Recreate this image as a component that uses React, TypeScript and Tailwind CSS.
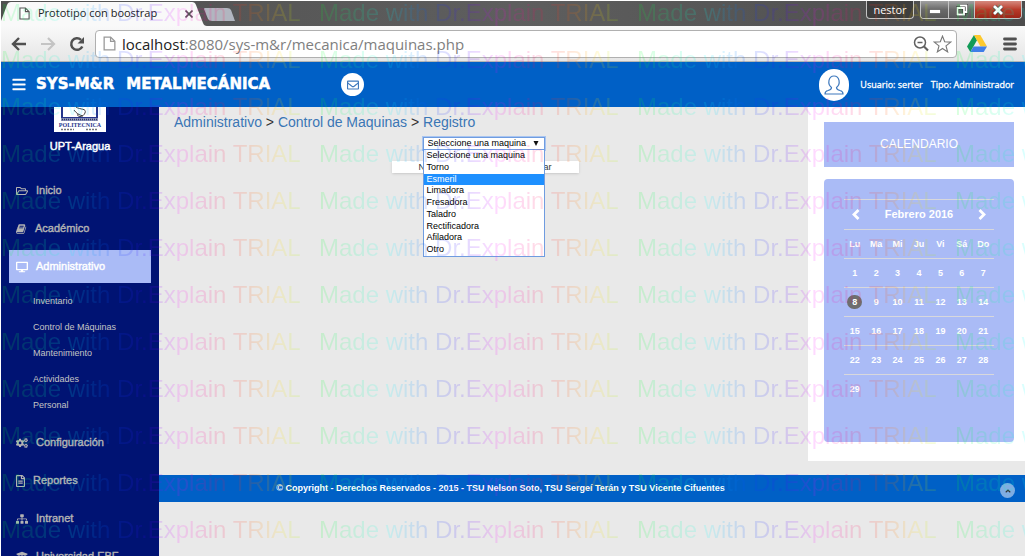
import React, { useState } from "react";
import { FaBars, FaRegEnvelope, FaRegFolderOpen, FaDesktop, FaCogs, FaRegFileAlt, FaSitemap, FaUniversity, FaAngleUp } from "react-icons/fa";

const MARK = "Made with Dr.Explain TRIAL";

function Watermark() {
  return (
    <div aria-hidden="true" className="pointer-events-none absolute inset-px z-50 overflow-hidden font-['Liberation_Sans',Arial,sans-serif] opacity-14">
      {Array.from({ length: 12 }, (_, i) => (
        <div key={i} className="flex h-[47px] w-[1272px]">
          {[0, 1, 2, 3].map((c) => (
            <span
              key={c}
              className="w-[318px] shrink-0 bg-[linear-gradient(90deg,#00ff20,#00ffff_22%,#0050ff_34%,#4000ff_46%,#ff00ff_56%,#ff0060_68%,#ff5000_78%,#ffe000_88%,#80ff00_97%,#00ff20)] bg-clip-text text-2xl leading-[24px] whitespace-pre text-transparent"
            >
              {MARK}
            </span>
          ))}
        </div>
      ))}
    </div>
  );
}

function PageIcon({ className }: { className: string }) {
  return (
    <svg viewBox="0 0 12 14" className={className} fill="#fff" stroke="currentColor" strokeWidth="1.2">
      <path d="M1 1h6l4 4v8H1z" />
      <path d="M7 1v4h4" fill="none" />
    </svg>
  );
}

function BrowserChrome() {
  return (
    <div className="shrink-0 font-['Open_Sans','Noto_Sans',sans-serif]">
      <div className="flex h-[25px] items-start bg-linear-to-r from-[#505050] via-[#5e5e5e] to-[#4c4c4c]">
        <div className="relative flex h-[25px] w-[206px] items-center pr-3 pl-[18px]">
          <svg viewBox="0 0 206 25" preserveAspectRatio="none" className="absolute inset-0 h-full w-full">
            <path d="M0 25V20L6 4Q7 1 10 1H191Q194 1 195 4L202 22Q203 25 206 25Z" fill="#f9f9f9" />
          </svg>
          <PageIcon className="relative h-[13px] w-[11px] text-[#555]" />
          <span className="relative ml-2 grow text-[11px] text-[#222]">Prototipo con boostrap</span>
          <button aria-label="Cerrar pestaña" className="relative p-0.5">
            <svg viewBox="0 0 8 8" className="h-2 w-2" stroke="#555" strokeWidth="1.6"><path d="M0.5 .5l7 7M7.5 .5l-7 7" /></svg>
          </button>
        </div>
        <button aria-label="Nueva pestaña" className="-ml-1 mt-1.5">
          <svg viewBox="0 0 32 15" className="h-[15px] w-8"><path d="M2 1H24Q27 1 28 3L32 14H9Q6 14 5 12L1 2Q1 1 2 1Z" fill="#b1b6c0" /></svg>
        </button>
        <div className="grow" />
        <button className="h-[18px] w-12 rounded-b-sm border border-t-0 border-[#c4c4c4] bg-[#3d3d3d] text-[11px] leading-4 text-white">nestor</button>
        <div className="mr-[3px] ml-[6px] flex h-[18px] overflow-hidden rounded-b-sm border border-t-0 border-[#c4c4c4]">
          <button aria-label="Minimizar" className="flex w-7 items-center justify-center border-r border-[#c4c4c4] bg-linear-to-b from-[#a0a0a0] via-[#6a6a6a] to-[#5a5a5a]">
            <svg viewBox="0 0 12 5" className="mt-1 h-[5px] w-3"><path d="M.5.5h11v4H.5z" fill="#fff" stroke="#444" strokeWidth=".6" /></svg>
          </button>
          <button aria-label="Restaurar" className="flex w-[26px] items-center justify-center border-r border-[#c4c4c4] bg-linear-to-b from-[#a0a0a0] via-[#6a6a6a] to-[#5a5a5a]">
            <svg viewBox="0 0 12 12" className="h-3 w-3" fill="none"><path d="M4 1.500h6.500v6.500h-2M1.500 4h6.500v6.500h-6.500z" stroke="#333" strokeWidth="3" /><path d="M4 1.500h6.500v6.500h-2M1.500 4h6.500v6.500h-6.500z" stroke="#fff" strokeWidth="1.800" /></svg>
          </button>
          <button aria-label="Cerrar" className="flex w-[46px] items-center justify-center bg-linear-to-b from-[#d4897e] via-[#b93a29] to-[#9c2417]">
            <svg viewBox="0 0 12 10" className="h-2.5 w-3"><path d="M2 1l8 8M10 1l-8 8" stroke="#444" strokeWidth="4" /><path d="M2 1l8 8M10 1l-8 8" stroke="#fff" strokeWidth="2.8" /></svg>
          </button>
        </div>
      </div>
      <div className="flex h-9 items-center border-b border-[#b5b5b5] bg-linear-to-b from-[#f9f9f9] to-[#e6e6e6] pr-2 pl-2.5">
        <button aria-label="Atrás">
          <svg viewBox="0 0 16 14" className="h-3.5 w-4" fill="none" stroke="#505050" strokeWidth="2.400"><path d="M15 7H2M8 1L2 7l6 6" /></svg>
        </button>
        <button aria-label="Adelante" className="ml-[13px]">
          <svg viewBox="0 0 16 14" className="h-3.5 w-4" fill="none" stroke="#c4c4c4" strokeWidth="2.200"><path d="M1 7h13M8 1l6 6-6 6" /></svg>
        </button>
        <button aria-label="Recargar" className="ml-[13px]">
          <svg viewBox="0 0 16 16" className="h-4 w-4"><path d="M13.300 10.500A5.800 5.800 0 1 1 12 3.800" fill="none" stroke="#505050" strokeWidth="2.500" /><path d="M15 1v6.500H8.500z" fill="#505050" /></svg>
        </button>
        <div className="ml-2.5 flex h-7 grow items-center rounded-sm border border-[#b0b0b0] bg-white pr-1 pl-[7px]">
          <PageIcon className="h-[15px] w-[13px] text-[#999]" />
          <div className="ml-1.5 grow text-[15px] leading-6 text-[#808080]">
            <span className="text-[#222]">localhost</span>:8080/sys-m&amp;r/mecanica/maquinas.php
          </div>
          <svg viewBox="0 0 16 16" className="h-4 w-4" fill="none" stroke="#606060"><circle cx="7" cy="6.500" r="5.500" strokeWidth="1.500" /><path d="M4.500 6.500h5" strokeWidth="1.500" /><path d="M11 10.500l4 4" strokeWidth="2.200" /></svg>
          <svg viewBox="0 0 20 19" className="ml-1 h-[18px] w-[19px]" fill="#fff" stroke="#777" strokeWidth="1.200"><path d="M10 1.200l2.300 6 6.400.3-5 4 1.700 6.300L10 14.300l-5.400 3.500L6.300 11.500l-5-4 6.400-.3z" /></svg>
        </div>
        <svg viewBox="0 0 20 17" className="ml-2.5 h-[17px] w-5"><path d="M7 0L0 11.500 3.300 17 10 5.300z" fill="#119b58" /><path d="M7 0h6.300L20 11.500h-6.500z" fill="#fdc92e" /><path d="M3.300 17L6.600 11.500H20L16.700 17z" fill="#3f7ee8" /></svg>
        <button aria-label="Menú" className="ml-4">
          <svg viewBox="0 0 14 14" className="h-3.5 w-3.5" stroke="#505050" strokeWidth="2.800" strokeLinecap="round"><path d="M1.500 2h11M1.500 7h11M1.500 12h11" /></svg>
        </button>
      </div>
    </div>
  );
}

function Header() {
  return (
    <header className="flex h-[45px] shrink-0 items-center bg-[#0060c6] px-[11px] text-white">
      <button aria-label="Alternar menú"><FaBars className="h-[15px] w-[14px]" /></button>
      <a href="#inicio" className="ml-2.5 flex gap-3 font-['DejaVu_Sans',sans-serif] text-[15px] font-bold [-webkit-text-stroke:0.5px_white]">
        <span>SYS-M&amp;R</span>
        <span>METALMECÁNICA</span>
      </a>
      <a href="#mensajes" aria-label="Mensajes" className="ml-[71px] flex h-[23px] w-[23px] items-center justify-center rounded-full bg-white text-[#3f79bd]">
        <FaRegEnvelope className="h-3 w-3" />
      </a>
      <div className="grow" />
      <div className="flex h-8 w-[30px] items-center justify-center rounded-full bg-white">
        <svg viewBox="0 0 20 20" className="h-5 w-5" fill="none" stroke="#3f79bd" strokeWidth="1.200"><path d="M7.500 12.500C3 9 4.500 1 10 1s7 8 2.500 11.500c0 2 1 2.300 3.500 3 2 .5 3 1.500 3 3.500H1c0-2 1-3 3-3.500 2.500-.7 3.500-1 3.500-3z" /></svg>
      </div>
      <div className="ml-[11px] flex gap-2 font-['Open_Sans','Noto_Sans',sans-serif] text-[9px] [-webkit-text-stroke:0.3px_white]">
        <span>Usuario: serter</span>
        <span>Tipo: Administrador</span>
      </div>
    </header>
  );
}

function BookIcon({ className }: { className?: string }) {
  return (
    <svg viewBox="0 0 1792 1792" fill="currentColor" className={className}>
      <path d="M1639 478q40 57 18 129l-275 906q-19 64-76.500 107.500t-122.500 43.500h-923q-77 0-148.500-53.500t-99.500-131.500q-24-67-2-127 0-4 3-27t4-37q1-8-3-21.500t-3-19.500q2-11 8-21t16.500-23.500 16.500-23.500q23-38 45-91.500t30-91.500q3-10 .5-30t-.5-28q3-11 17-28t17-23q21-36 42-92t25-90q1-9-2.500-32t.5-28q4-13 22-30.500t22-22.500q19-26 42.500-84.500t27.500-96.500q1-8-3-25.500t-2-26.500q2-8 9-18t18-23 17-21q8-12 16.500-30.500t15-35 16-36 19.500-32 26.500-23.500 36-11.500 47.500 5.500l-1 3q38-9 51-9h761q74 0 114 56t18 130l-274 906q-36 119-71.500 153.500t-128.500 34.500h-869q-27 0-38 15-11 16-1 43 24 70 144 70h923q29 0 56-15.500t35-41.500l300-987q7-22 5-57 38 15 59 43zm-1064 2q-4 13 2 22.500t20 9.500h608q13 0 25.500-9.500t16.500-22.500l21-64q4-13-2-22.500t-20-9.500h-608q-13 0-25.500 9.500t-16.500 22.500zm-83 256q-4 13 2 22.500t20 9.500h608q13 0 25.500-9.500t16.500-22.500l21-64q4-13-2-22.500t-20-9.500h-608q-13 0-25.500 9.500t-16.500 22.500z" />
    </svg>
  );
}

function NavItem({ icon, label, active }: { icon: React.ReactNode; label: string; active?: boolean }) {
  return (
    <li>
      <a href="#menu" className={`flex h-[33px] items-center gap-2 pl-[7px] text-[11px] [-webkit-text-stroke:0.4px_currentColor] ${active ? "bg-[#aabbf6] text-white" : "text-[#b3b3b3]"}`}>
        {icon}
        {label}
      </a>
    </li>
  );
}

function Sidebar() {
  return (
    <aside className="w-[158px] shrink-0 overflow-hidden bg-[#001373]">
      <svg viewBox="0 0 52 25" className="mx-auto block h-[25px] w-[52px]">
        <rect width="52" height="25" fill="#fff" />
        <path d="M8 0v11h35V0" fill="none" stroke="#26358c" strokeWidth="2" />
        <path d="M22 0c4 3 11 1 9 6s-9 4-7 1M20 3c2 3 5 5 9 6" fill="none" stroke="#444" />
        <path d="M7 11h37v3H7z" fill="#8b93b8" />
        <path d="M8 12.500h35" stroke="#333a66" strokeWidth="1.500" strokeDasharray="1 1" />
        <text x="26" y="20" textAnchor="middle" fontSize="6" fontWeight="bold" fill="#26358c" className="font-['Liberation_Serif',serif]">POLITECNICA</text>
        <path d="M7 22.500h13M32 22.500h12" stroke="#777" strokeWidth="1.500" strokeDasharray="2 1" />
      </svg>
      <p className="mt-1.5 text-center text-[11px] leading-4 text-white [-webkit-text-stroke:0.5px_currentColor]">UPT-Aragua</p>
      <nav className="mt-5 px-2">
        <ul className="flex flex-col gap-[5px]">
          <NavItem icon={<FaRegFolderOpen className="h-3 w-3" />} label="Inicio" />
          <NavItem icon={<BookIcon className="h-3 w-[11px]" />} label="Académico" />
          <NavItem icon={<FaDesktop className="h-3 w-3" />} label="Administrativo" active />
          <li className="mb-[3px]">
            <ul>
              {["Inventario", "Control de Máquinas", "Mantenimiento", "Actividades", "Personal"].map((t) => (
                <li key={t}>
                  <a href="#submenu" className="block pl-6 text-[9px] leading-[26px] text-[#c4c4c4]">{t}</a>
                </li>
              ))}
            </ul>
          </li>
          <NavItem icon={<FaCogs className="h-3 w-3" />} label="Configuración" />
          <NavItem icon={<FaRegFileAlt className="h-3 w-[9px]" />} label="Reportes" />
          <NavItem icon={<FaSitemap className="h-3 w-3" />} label="Intranet" />
          <NavItem icon={<FaUniversity className="h-3 w-3" />} label="Universidad EBF" />
        </ul>
      </nav>
    </aside>
  );
}

const MACHINES = ["Seleccione una maquina", "Torno", "Esmeril", "Limadora", "Fresadora", "Taladro", "Rectificadora", "Afiladora", "Otro"];

function MachinePicker() {
  const [value, setValue] = useState(MACHINES[0]);
  return (
    <div className="relative z-10 mt-1 ml-[31px] w-[122px]">
      <select
        aria-label="Maquina"
        value={value}
        onChange={(e) => setValue(e.target.value)}
        className="block h-[13px] w-full appearance-none border border-[#6f9ce0] bg-white pl-1 text-[9px] leading-[11px] text-black outline-1 outline-[#a9c5f0]"
      >
        {MACHINES.map((m) => <option key={m}>{m}</option>)}
      </select>
      <svg aria-hidden="true" viewBox="0 0 6 5" className="pointer-events-none absolute top-1 right-1.5 h-[5px] w-1.5"><path d="M.5 0h5L3 5z" fill="#111" /></svg>
      <ul role="listbox" aria-label="Opciones de maquina" className="absolute top-3 left-0 flex h-[108px] w-full flex-col border border-[#6f9ce0] bg-white text-[9px] leading-[11px] text-black">
        {MACHINES.map((m) => (
          <li key={m} role="option" aria-selected={m === "Esmeril"} onClick={() => setValue(m)} className={`flex-1 pl-[3px] ${m === "Esmeril" ? "bg-[#1e90ff] text-white" : ""}`}>{m}</li>
        ))}
      </ul>
    </div>
  );
}

const WEEKS: number[][] = [0, 1, 2, 3].map((w) => [1, 2, 3, 4, 5, 6, 7].map((d) => w * 7 + d)).concat([[29]]);

function Calendar() {
  return (
    <aside className="h-[354px] w-[217px] shrink-0 bg-white pt-[15px] pr-[11px] pl-4">
      <h2 className="bg-[#aabbf6] text-center text-xs leading-[45px] text-white">CALENDARIO</h2>
      <div className="mt-3 h-[263px] rounded bg-[#aabbf6] px-5 pt-5 text-white">
        <div className="flex h-[30px] items-center justify-between border-t border-[#d8d8dc] px-2">
          <button aria-label="Mes anterior">
            <svg viewBox="0 0 8 11" className="h-[11px] w-2" fill="none" stroke="currentColor" strokeWidth="2.800"><path d="M6.500 1L2 5.500l4.500 4.500" /></svg>
          </button>
          <span className="text-[11px] font-bold">Febrero 2016</span>
          <button aria-label="Mes siguiente">
            <svg viewBox="0 0 8 11" className="h-[11px] w-2" fill="none" stroke="currentColor" strokeWidth="2.800"><path d="M1.500 1L6 5.500 1.500 10" /></svg>
          </button>
        </div>
        <table className="w-full table-fixed border-collapse text-center text-[9px] leading-[14px] font-bold">
          <thead>
            <tr className="h-[29px] border-t border-[#d8d8dc]">
              {["Lu", "Ma", "Mi", "Ju", "Vi", "Sá", "Do"].map((d) => <th key={d} className="p-0">{d}</th>)}
            </tr>
          </thead>
          <tbody>
            {WEEKS.map((week) => (
              <tr key={week[0]} className="h-[29px] border-t border-[#d8d8dc]">
                {week.map((d) => (
                  <td key={d} className="p-0">
                    <span className={d === 8 ? "mx-auto block w-[15px] rounded-full bg-[#6e6e6e]" : ""}>{d}</span>
                  </td>
                ))}
              </tr>
            ))}
          </tbody>
        </table>
      </div>
    </aside>
  );
}

export default function App() {
  return (
    <div className="relative flex h-screen flex-col overflow-hidden bg-white p-px font-['Liberation_Sans',Arial,sans-serif]">
      <BrowserChrome />
      <Header />
      <div className="flex min-h-0 grow">
        <Sidebar />
        <div className="flex min-w-0 grow flex-col bg-[#e9e9e9]">
          <div className="flex">
            <main className="min-w-0 grow pt-1 pl-[15px]">
              <p className="text-sm leading-[22px] text-[#333]">
                <a href="#administrativo" className="text-[#3a76b5]">Administrativo</a> &gt; <a href="#control" className="text-[#3a76b5]">Control de Maquinas</a> &gt; <a href="#registro" className="text-[#3a76b5]">Registro</a>
              </p>
              <div className="pr-3">
                <div className="mx-auto w-[187px]">
                  <MachinePicker />
                  <p className="mt-[11px] bg-white text-center text-[9px] leading-[12px] text-[#333] shadow-sm">No existen registros para mostrar</p>
                </div>
              </div>
            </main>
            <Calendar />
          </div>
          <footer className="mt-3.5 flex h-[27px] shrink-0 items-center bg-[#0060c6] px-2.5 text-[9px] font-bold text-white">
            <p className="grow pr-[168px] text-center">© Copyright - Derechos Reservados - 2015 - TSU Nelson Soto, TSU Sergeí Terán y TSU Vicente Cifuentes</p>
            <a href="#top" aria-label="Subir" className="mt-1 flex h-[15px] w-[15px] items-center justify-center rounded-full bg-[#7fade2] text-[#333]"><FaAngleUp className="h-2 w-2" /></a>
          </footer>
        </div>
      </div>
      <Watermark />
    </div>
  );
}
